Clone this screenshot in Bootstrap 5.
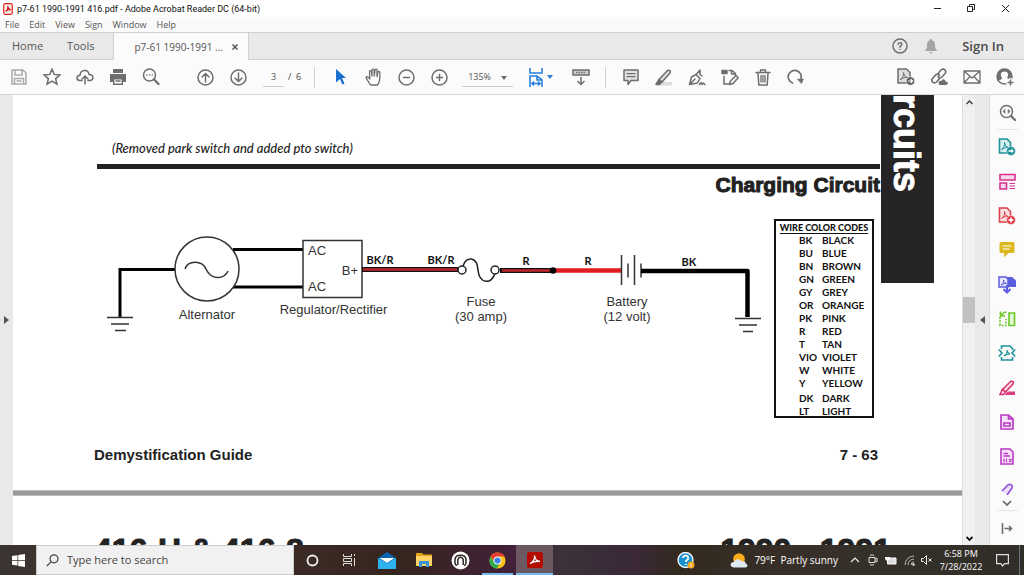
<!DOCTYPE html>
<html lang="en">
<head>
<meta charset="utf-8">
<meta name="viewport" content="width=device-width, initial-scale=1">
<title>p7-61 1990-1991 416.pdf - Adobe Acrobat Reader DC (64-bit)</title>
<link href="https://cdn.jsdelivr.net/npm/bootstrap@5.3.0/dist/css/bootstrap.min.css" rel="stylesheet">
<style>
  body { font-family: "Open Sans", "Noto Sans", sans-serif; font-size: 9px; line-height: 16px; color: #444; background: #fff; }
  svg { display: block; flex: none; }
  button { border: 0; background: none; padding: 0; color: inherit; display: flex; align-items: center; justify-content: center; }
  a { color: inherit; text-decoration: none; }
  .ic { fill: none; stroke: #6e6e6e; stroke-width: 1.5; stroke-linecap: round; stroke-linejoin: round; }
  .title-row { height: 17px; color: #111; padding: 0 2px 0 3px; gap: 4px; font-family: Roboto, sans-serif; }
  .title-row button { width: 34px; height: 17px; }
  .menu-row { height: 15px; background: #fafafa; padding-left: 5px; gap: 10px; color: #555; }
  .tab-row { height: 28px; background: #e9e9e9; border-top: 1px solid #d0d0d0; border-bottom: 1px solid #d0d0d0; font-size: 11px; color: #555; }
  .doc-tab { width: 136px; margin: 0 0 -1px 19px; padding-left: 20px; gap: 9px; background: #fbfbfb; border-left: 1px solid #d0d0d0; border-right: 1px solid #d0d0d0; font-size: 10px; }
  .sign-in { font-size: 13px; font-weight: 600; color: #4b4b4b; }
  .tool-row { height: 35px; background: #fbfbfb; border-bottom: 1px solid #d6d6d6; padding: 0 3px 0 2px; }
  .tool-row button { width: 33px; height: 33px; flex: none; }
  .tool-row .group-start { margin-left: 22px; }
  .page-no { width: 21px; height: 20px; border: 0; border-bottom: 1px solid #ccc; background: none; text-align: center; font-size: 9px; color: #555; padding: 0; }
  .zoom-box { position: relative; width: 51px; height: 20px; margin: 0 6px; border-bottom: 1px solid #ccc; }
  .zoom-box select { appearance: none; border: 0; background: none; width: 100%; height: 19px; font-size: 9px; color: #555; padding: 0 0 0 6px; }
  .zoom-box svg { position: absolute; right: 6px; top: 9px; pointer-events: none; }
  .divider { width: 1px; height: 21px; margin: 0 9px; background: #d0d0d0; }
  .edge { background: #e9e9e9; }
  .doc-area { font-family: "Liberation Sans", Arial, sans-serif; color: #222; }
  .sheet { display: grid; grid-template-columns: minmax(0, 1fr) 53px; column-gap: 1px; padding: 0 28px 0 81px; }
  .note { font: italic 500 13px/16px Lato, sans-serif; margin: 45px 0 0 18px; }
  .rule { height: 5px; margin: 8px 0 0 3px; background: #222; }
  .topic { font-size: 21px; line-height: 26px; font-weight: 700; margin: 3px 0 0; text-align: right; color: #222; -webkit-text-stroke: 1px #222; }
  .side-tab { height: 188px; background: #262425; color: #fff; padding-bottom: 91px; overflow: hidden; }
  .side-tab span { writing-mode: vertical-rl; font-size: 36px; line-height: 44px; font-weight: 700; margin-right: 4px; -webkit-text-stroke: 1px #fff; }
  .figure-row { margin: 21px 6px 0 3px; }
  .diagram { width: 100%; height: auto; margin-top: 9px; overflow: visible; }
  .lbl { font-size: 13px; fill: #333; text-anchor: middle; }
  .wire-lbl { font: 700 11px Lato, sans-serif; fill: #111; text-anchor: middle; }
  .codes { width: 100px; height: 199px; flex: none; border: 2px solid #111; font: 700 10px/13px Lato, sans-serif; color: #111; }
  .codes caption { caption-side: top; padding: 0; font-size: 9px; font-weight: 900; color: #111; text-align: center; text-decoration: underline; text-underline-offset: 2px; white-space: nowrap; }
  .codes table { width: 100%; }
  .codes th, .codes td { padding: 0; height: 13px; }
  .codes th { width: 46px; padding-left: 23px; text-align: left; font-weight: 700; }
  .codes .apart th, .codes .apart td { padding-top: 2px; }
  .foot { font-size: 15px; line-height: 20px; font-weight: 700; margin: 27px 2px 25px 0; }
  .page-gap { height: 6px; background: #999; border-top: 1px solid #bbb; border-bottom: 1px solid #bbb; }
  .next-head { font-size: 32px; line-height: 32px; font-weight: 700; margin: 38px 71px 0 81px; white-space: nowrap; color: #222; -webkit-text-stroke: 1px #222; }
  .vscroll { width: 13px; background: #f0f0f0; border-left: 1px solid #ddd; }
  .vscroll button { height: 14px; width: 12px; }
  .thumb { height: 26px; background: #c1c1c1; }
  .rail { width: 35px; background: #fbfbfb; border-left: 1px solid #ddd; }
  .rail button { width: 34px; height: 32px; flex: none; }
  .rail button.end { height: 34px; }
  .rail button.more { height: 14px; }
  .rail hr { width: 21px; margin: 0 auto; border-color: #aaa; flex: none; }
  .rail .tools { min-height: 0; padding: 1px 0; }
  .rail button.cut { height: 20px; padding-top: 8px; overflow: hidden; align-items: flex-start; }
  .taskbar { height: 30px; color: #fff; background: linear-gradient(90deg, #3a3432 0%, #3b322e 4%, #3b2a23 30%, #35251f 40%, #43203a 50%, #3b3239 55%, #3a2838 62%, #33291f 66%, #37302a 80%, #302e28 100%); }
  .taskbar button { height: 30px; }
  .task { width: 37px; position: relative; }
  .task.open::after { content: ""; position: absolute; left: 3px; right: 3px; bottom: 0; height: 2px; background: #76b9ed; }
  .task.active { background: #6b5860; }
  .task.active::after { left: 0; right: 0; }
  .search { width: 258px; height: 30px; background: #f1f1f1; padding-left: 9px; gap: 8px; border: 1px solid #ccc; }
  .search input { border: 0; background: none; font-size: 11px; color: #444; padding: 0; width: 180px; outline: 0; }
  .search input::placeholder { color: #444; opacity: 1; }
  .weather { font-size: 10px; gap: 6px; white-space: nowrap; }
  .tray { width: 18px; }
  .clock { width: 50px; line-height: 13px; text-align: center; }
</style>
</head>
<body>
<div class="vh-100 d-flex flex-column overflow-hidden">

  <header class="flex-shrink-0">
    <div class="title-row d-flex align-items-center">
      <svg width="10" height="12" viewBox="0 0 10 12"><rect x=".7" y=".7" width="8.6" height="10.6" rx="1.5" fill="#fff0ee" stroke="#e2231a" stroke-width="1.2"/><path d="M2.5 8.3C4 7.5 5 5 4.7 3c.5 2.500 1.500 3.700 3.200 4C6 6.500 4 7 2.500 8.300Z" fill="none" stroke="#c11" stroke-width="1.100"/></svg>
      <span>p7-61 1990-1991 416.pdf - Adobe Acrobat Reader DC (64-bit)</span>
      <div class="d-flex ms-auto">
        <button aria-label="Minimize"><svg width="9" height="9"><path d="M1 4.500h7" stroke="#222"/></svg></button>
        <button aria-label="Restore"><svg width="9" height="9" fill="none" stroke="#222"><path d="M.5 2.500h5v5h-5zM2.500 2.500v-2h5v5h-2"/></svg></button>
        <button aria-label="Close"><svg width="9" height="9" stroke="#222"><path d="M1 1l7 7M8 1l-7 7"/></svg></button>
      </div>
    </div>
    <nav class="menu-row d-flex align-items-center" aria-label="Menu">
      <a href="#">File</a><a href="#">Edit</a><a href="#">View</a><a href="#">Sign</a><a href="#">Window</a><a href="#">Help</a>
    </nav>
    <nav class="tab-row d-flex" aria-label="Tabs">
      <a href="#" class="align-self-center ms-1 ps-2">Home</a>
      <a href="#" class="align-self-center ms-4">Tools</a>
      <div class="doc-tab d-flex align-items-center"><a href="#">p7-61 1990-1991 ...</a>
        <button aria-label="Close tab"><svg width="6" height="6" stroke="#555" stroke-width="1.500"><path d="M.5.5l5 5M5.500.5l-5 5"/></svg></button></div>
      <div class="d-flex align-items-center ms-auto me-3 pe-1">
        <button class="me-3" aria-label="Help"><svg class="ic" width="16" height="16" viewBox="0 0 16 16"><circle cx="8" cy="8" r="7"/><path d="M6.200 6.300C6.200 4 9.900 4.200 9.800 6.300 9.700 7.700 8 7.700 8 9.300M8 11.500v.1"/></svg></button>
        <button class="me-4" aria-label="Notifications"><svg width="14" height="15" viewBox="0 0 14 15" fill="#a5a5a5"><path d="M7 0c.8 0 1.200.5 1.200 1.300C10.500 2 11 4 11 6c0 3 .7 4.300 2.500 6H.5C2.300 10.300 3 9 3 6c0-2 .5-4 2.800-4.700C5.800.5 6.200 0 7 0ZM5.500 13h3c-.3 2-2.700 2-3 0Z"/></svg></button>
        <a href="#" class="sign-in">Sign In</a>
      </div>
    </nav>
    <div class="tool-row d-flex align-items-center">
      <button aria-label="Save"><svg width="16" height="16" viewBox="0 0 16 16" fill="none" stroke="#aaa" stroke-width="1.500"><path d="M1 1h11l3 3v11H1zM4 1v5h7V1M3.500 15V9.500h9V15M5.500 12h5"/></svg></button>
      <button aria-label="Favorite"><svg class="ic" width="18" height="18" viewBox="0 0 18 18"><path d="M9 1.200l2.200 5.200 5.800.5-4.400 3.700 1.400 5.600L9 13.200l-5 3 1.400-5.600L1 6.900l5.800-.5z" stroke-linejoin="miter"/></svg></button>
      <button aria-label="Upload"><svg class="ic" width="18" height="16" viewBox="0 0 18 16"><path d="M6 11.500H4C0 11.500 0 6.500 4 6.300 4.500 0 12.500 0 13 5.500c5 0 5 6 1 6h-2M9 15V7.500M6 10l3-3 3 3"/></svg></button>
      <button aria-label="Print"><svg width="18" height="16" viewBox="0 0 18 16"><path d="M4 0h10v4H4zM1 5h16v8h-3V9.500H4V13H1z" fill="#6e6e6e"/><path d="M4.700 9.700h8.600v5.500H4.700zM6.500 12h5" fill="#fff" stroke="#6e6e6e" stroke-width="1.400"/></svg></button>
      <button aria-label="Find"><svg class="ic" width="18" height="18" viewBox="0 0 18 18"><circle cx="7.500" cy="7" r="6"/><path d="M12 11.500l4.500 4.500" stroke-width="2.300"/><path d="M4.800 7h.1M7.500 7h.1M10.200 7h.1"/></svg></button>
      <button class="group-start" aria-label="Previous page"><svg class="ic" width="17" height="17" viewBox="0 0 17 17"><circle cx="8.500" cy="8.500" r="7.500"/><path d="M8.500 13V4.500M5 8l3.500-3.500L12 8"/></svg></button>
      <button aria-label="Next page"><svg class="ic" width="17" height="17" viewBox="0 0 17 17"><circle cx="8.500" cy="8.500" r="7.500"/><path d="M8.500 4v8.500M5 9l3.500 3.500L12 9"/></svg></button>
      <input class="page-no ms-2" value="3" aria-label="Page"><span class="ms-1 me-1">/&nbsp; 6</span>
      <span class="divider"></span>
      <button aria-label="Select"><svg width="10" height="16" viewBox="0 0 10 16"><path d="M0 0l10 9H6l2.500 5.500-2.200 1L4 10 0 13.500z" fill="#1b6fd0"/></svg></button>
      <button aria-label="Hand"><svg class="ic" width="18" height="18" viewBox="0 0 18 18"><path stroke-width="1.300" d="M5.500 17C4 14 2 12 1 9.500 1.500 8.300 3 8.500 4.800 11L4.500 3.500c.3-1.300 1.800-1.200 2 0L7 8V2c.3-1.300 1.800-1.300 2 0l.3 6L10 2c.3-1.200 1.800-1.200 2 0v6.500l1-4.500c.4-1 1.700-.9 1.800.2C15 9 15.500 14 12.500 17z"/></svg></button>
      <button aria-label="Zoom out"><svg class="ic" width="17" height="17" viewBox="0 0 17 17"><circle cx="8.500" cy="8.500" r="7.500"/><path d="M5.500 8.500h6"/></svg></button>
      <button aria-label="Zoom in"><svg class="ic" width="17" height="17" viewBox="0 0 17 17"><circle cx="8.500" cy="8.500" r="7.500"/><path d="M5.500 8.500h6M8.500 5.500v6"/></svg></button>
      <div class="zoom-box"><select aria-label="Zoom"><option>135%</option></select><svg width="6" height="4"><path d="M0 0h6L3 4z" fill="#666"/></svg></div>
      <button class="ms-1" aria-label="Fit width"><svg width="26" height="19" viewBox="0 0 26 19" fill="none" stroke="#2a7fdb" stroke-width="1.600"><path d="M3 0v5h12V0M3 19V8h7l5 4v7M10 8v4h5M5 15.500h8M7 13.500l-2 2 2 2M11 13.500l2 2-2 2"/><path d="M20 7h6l-3 4z" fill="#2a7fdb" stroke="none"/></svg></button>
      <button class="ms-2" aria-label="Scroll mode"><svg width="18" height="17" viewBox="0 0 18 17" fill="none" stroke="#6e6e6e" stroke-width="1.500"><path d="M1 1h16v5H1z" fill="#ccc"/><path d="M4 3.500h10" stroke-dasharray="1.500 1"/><path d="M9 8v7.500M5.500 12L9 15.500 12.500 12"/></svg></button>
      <span class="divider mx-2"></span>
      <button aria-label="Comment"><svg class="ic" width="16" height="17" viewBox="0 0 16 17"><path d="M1 1h14v10.500H8L5 15.500v-4H1z" fill="#e2e2e2"/><path d="M4 4.700h8M4 7.700h8" stroke-width="1.200"/></svg></button>
      <button aria-label="Highlight"><svg class="ic" width="18" height="17" viewBox="0 0 18 17"><path d="M8 13h9v3.500H5z" fill="#ddd" stroke="none"/><path d="M4 10.500L12.500 1.500c2-1 3.500.5 2.500 2.500L7 13z" fill="#ddd"/><path d="M4 10.500L7 13l-2.500 2.500H1z" fill="#6e6e6e"/></svg></button>
      <button aria-label="Sign"><svg class="ic" width="18" height="17" viewBox="0 0 18 17"><path d="M1.500 15.500l2-7.500L8 5.500l4 4-2.500 4.500zM1.500 15.500L7 10M8.500 5L12 1v4.500L14 7"/><path d="M11.500 15.500l1.500-2 1 2 1.200-1.500 1.800 1.500"/></svg></button>
      <button aria-label="Edit page"><svg class="ic" width="18" height="17" viewBox="0 0 18 17"><path d="M1 1.500h5v3H1z" fill="#6e6e6e"/><path d="M8 1.500h3l3.500 3v2M10.500 1.500v3.500h4M3 7.500v7.500h5M8.500 15.500l1-3.500L15 6.500l2.200 2.200L12 14.500z"/></svg></button>
      <button aria-label="Delete"><svg class="ic" width="16" height="17" viewBox="0 0 16 17"><path d="M1 3.500h14M5.500 3V1h5v2M3 4l.8 12h8.400L13 4"/><path d="M6 6.500v6.500M8 6.500v6.500M10 6.500v6.500" stroke-width="1.300"/></svg></button>
      <button aria-label="Rotate"><svg class="ic" width="17" height="16" viewBox="0 0 17 16"><path d="M5.500 14A6.500 6.500 0 1 1 14 9.500" stroke-width="1.700"/><path d="M10.500 10h6l-2 4.500z" fill="#6e6e6e" stroke-width=".5"/></svg></button>
      <div class="d-flex ms-auto">
        <button aria-label="Export PDF"><svg class="ic" width="18" height="18" viewBox="0 0 18 18"><path d="M1 1h8.500L13 4.500V15H1z" fill="#ddd"/><path d="M3.500 11.500C6 10 7 7 6.500 4.500c.5 3 1.800 4.500 4 5-2.500-.3-5 .5-7 2z" stroke-width="1"/><circle cx="13.500" cy="13" r="4.300" fill="#5d5d5d" stroke="#fff" stroke-width=".6"/><path d="M11.500 13h4M14 11.500l1.500 1.500-1.500 1.500" stroke="#fff" stroke-width="1.200"/></svg></button>
        <button aria-label="Share link"><svg class="ic" width="18" height="18" viewBox="0 0 18 18"><path d="M8 5.500L11 2c3-2.500 6 1 4 3.500L12 9c-1.500 1.500-3.500 1-4-.5M9.500 10.500l-3 3.500c-3 2.500-6-1-4-3.500L5.500 7C7 5.500 9 6 9.500 7.500" stroke-width="1.600"/><path d="M9.500 17c-2.500-3 .5-5 2-4 1-3 4-2 4 .5 3 0 3 3.500.5 3.500z" fill="#6e6e6e" stroke="none"/></svg></button>
        <button aria-label="Mail"><svg class="ic" width="18" height="14" viewBox="0 0 18 14"><path stroke-width="1.300" d="M1 1h16v12H1zM1 1l8 7 8-7M1 13l6-6.500M17 13l-6-6.500"/></svg></button>
        <button aria-label="Account"><svg class="ic" width="18" height="18" viewBox="0 0 18 18"><circle cx="8.500" cy="8.500" r="7.500"/><path d="M2.500 4C5 0 12 0 14.500 4c2 3 1.500 6 0 8l-3.500-2c2-3 1.500-6.500-2.500-6.500S4 7 6 10c.2 1.500-2 1.500-3.500 2.500C.5 10 .5 7 2.500 4z" fill="#6e6e6e" stroke="none"/><path d="M14.500 11.500v6M11.500 14.500h6" stroke="#fbfbfb" stroke-width="3.500"/><path d="M14.500 12v5M12 14.500h5"/></svg></button>
      </div>
    </div>
  </header>

  <main class="d-flex flex-grow-1 overflow-hidden">
    <div class="edge d-flex align-items-center justify-content-center" style="width:13px"><svg width="5" height="8"><path d="M0 0l5 4-5 4z" fill="#555"/></svg></div>

    <div class="doc-area flex-grow-1 overflow-hidden">
      <article class="sheet">
        <div>
          <p class="note">(Removed park switch and added pto switch)</p>
          <div class="rule"></div>
          <h1 class="topic">Charging Circuit</h1>
          <div class="figure-row d-flex align-items-start">
            <div class="flex-grow-1">
            <svg class="diagram" viewBox="97 228 677 112" role="img" aria-label="Charging circuit diagram">
              <g fill="none" stroke="#000" stroke-width="3">
                <path d="M175 269.500H120V317"/><path d="M233 249.500H303M233 287H303"/>
              </g>
              <g fill="none" stroke="#333" stroke-width="1.500">
                <path d="M107 317.500h26M111 324h18M115 330.500h11"/>
                <circle cx="207" cy="269" r="32" fill="#fff"/>
                <path d="M185 269c3-9 17-9 21 0 5 11 18 11 22 2"/>
                <rect x="303" y="240.500" width="59" height="57"/>
                <path d="M735 318.500h26M739 325h18M743 331.500h10"/>
              </g>
              <path d="M362 269.500h96M500 270.500h52" stroke="#111" stroke-width="5"/>
              <path d="M363 269.500h94M502 270.500h48" stroke="#c1272d" stroke-width="2.500"/>
              <path d="M553 270.500h68" stroke="#e01b22" stroke-width="4.500"/>
              <circle cx="553" cy="270.500" r="3.300"/>
              <path d="M463 266c3-10 14-10 15 4 1 14 14 15 17 3" fill="none" stroke="#222" stroke-width="1.600"/>
              <circle cx="462" cy="270" r="4" fill="#fff" stroke="#222" stroke-width="1.500"/>
              <circle cx="495" cy="270" r="4" fill="#fff" stroke="#222" stroke-width="1.500"/>
              <path d="M621.500 255v30M628 263.500v14M634.500 255v30M641 263.500v14" stroke="#333" stroke-width="1.500"/>
              <path d="M641 271h106.500v46" fill="none" stroke="#000" stroke-width="4.500" stroke-linejoin="round"/>
              <g class="lbl">
                <text x="207" y="319">Alternator</text><text x="333.500" y="314">Regulator/Rectifier</text>
                <text x="317" y="255">AC</text><text x="317" y="291">AC</text><text x="350" y="275">B+</text>
                <text x="481" y="306">Fuse</text><text x="481" y="321">(30 amp)</text>
                <text x="627" y="306">Battery</text><text x="627" y="321">(12 volt)</text>
              </g>
              <g class="wire-lbl">
                <text x="380" y="264">BK/R</text><text x="441" y="264">BK/R</text><text x="526" y="265">R</text><text x="588" y="265">R</text><text x="689" y="266">BK</text>
              </g>
            </svg>
            </div>
            <div class="codes">
              <table>
                <caption>WIRE COLOR CODES</caption>
                <tbody>
                <tr><th scope="row">BK</th><td>BLACK</td></tr><tr><th scope="row">BU</th><td>BLUE</td></tr>
                <tr><th scope="row">BN</th><td>BROWN</td></tr><tr><th scope="row">GN</th><td>GREEN</td></tr>
                <tr><th scope="row">GY</th><td>GREY</td></tr><tr><th scope="row">OR</th><td>ORANGE</td></tr>
                <tr><th scope="row">PK</th><td>PINK</td></tr><tr><th scope="row">R</th><td>RED</td></tr>
                <tr><th scope="row">T</th><td>TAN</td></tr><tr><th scope="row">VIO</th><td>VIOLET</td></tr>
                <tr><th scope="row">W</th><td>WHITE</td></tr><tr><th scope="row">Y</th><td>YELLOW</td></tr>
                <tr class="apart"><th scope="row">DK</th><td>DARK</td></tr><tr><th scope="row">LT</th><td>LIGHT</td></tr>
                </tbody>
              </table>
            </div>
          </div>
          <div class="foot d-flex justify-content-between"><span>Demystification Guide</span><span>7 - 63</span></div>
        </div>
        <div class="side-tab d-flex align-items-end justify-content-center"><span>rcuits</span></div>
      </article>
      <div class="page-gap"></div>
      <div class="next-head d-flex justify-content-between"><span>416-H &amp; 416-8</span><span>1990 - 1991</span></div>
    </div>

    <div class="vscroll d-flex flex-column">
      <button aria-label="Scroll up"><svg width="7" height="5" fill="none" stroke="#444" stroke-width="1.500"><path d="M.5 4L3.500 1l3 3"/></svg></button>
      <div class="flex-grow-1 d-flex flex-column"><div style="flex:188"></div><div class="thumb"></div><div style="flex:208"></div></div>
      <button aria-label="Scroll down"><svg width="7" height="5" fill="none" stroke="#111" stroke-width="1.800"><path d="M.5 1l3 3 3-3"/></svg></button>
    </div>
    <div class="edge d-flex align-items-center justify-content-center" style="width:14px"><svg width="5" height="8"><path d="M5 0L0 4l5 4z" fill="#555"/></svg></div>

    <aside class="rail d-flex flex-column">
      <button class="end" aria-label="Search tools"><svg class="ic" width="17" height="17" viewBox="0 0 17 17"><circle cx="7.500" cy="7.500" r="6"/><path d="M12 12l4 4" stroke-width="2.300"/><path d="M6 5.500v4L4 7.500zM9 5.500v4l2-2z" fill="#6e6e6e" stroke-width=".5"/></svg></button>
      <hr>
      <div class="tools flex-grow-1 d-flex flex-column justify-content-between">
        <button aria-label="Export"><svg width="18" height="18" viewBox="0 0 18 18" fill="none" stroke="#1d9299" stroke-width="1.600"><path d="M1.500 1H9l3.500 3.500V15h-11z" fill="#d5eef0"/><path d="M3.500 11.500C6 10 7 7 6.500 4.500c.5 3 1.800 4.500 4 5-2.500-.3-5 .5-7 2z" stroke-width="1"/><circle cx="13" cy="13" r="4.500" fill="#1d9299" stroke="#fff" stroke-width=".5"/><path d="M10.500 13h4.500M13.500 11.500L15 13l-1.500 1.500" stroke="#fff" stroke-width="1.300"/></svg></button>
        <button aria-label="Organize"><svg width="17" height="17" viewBox="0 0 17 17" fill="none" stroke="#d8308f" stroke-width="1.600"><path d="M1 1.500h15V7H1zM1 10h6.500v6H1z" fill="#fbd9ec"/><path d="M10.500 10.500H16M10.500 13H16M10.500 15.500H16" stroke-width="1"/></svg></button>
        <button aria-label="Create"><svg width="18" height="18" viewBox="0 0 18 18" fill="none" stroke="#dc3f49" stroke-width="1.600"><path d="M1.500 1H9l3.500 3.500V15h-11z" fill="#fbe1e2"/><path d="M3.500 11.500C6 10 7 7 6.500 4.500c.5 3 1.800 4.500 4 5-2.500-.3-5 .5-7 2z" stroke-width="1"/><circle cx="13" cy="13" r="4.500" fill="#dc3f49" stroke="#fff" stroke-width=".5"/><path d="M10.500 13h5M13 10.500v5" stroke="#fff" stroke-width="1.500"/></svg></button>
        <button aria-label="Comment"><svg width="16" height="16" viewBox="0 0 16 16"><path d="M2 0h12q1.500 0 1.500 1.500v8Q15.500 11 14 11H9.500L5 15.500V11H2Q.5 11 .5 9.500v-8Q.5 0 2 0z" fill="#dcb81f"/><path d="M3.500 4h9M3.500 7h7" stroke="#fff" stroke-width="1.200"/></svg></button>
        <button aria-label="Combine"><svg width="18" height="18" viewBox="0 0 18 18" fill="none" stroke="#5c5ce0" stroke-width="1.500"><path d="M9 1h5l4 3.500V11H9z" fill="#5c5ce0" stroke="none"/><path d="M1 1h7l2 2v8H1z" fill="#e4e4fc"/><path d="M3 9c2-1 3-3 2.500-5C6 6 7 7 8.500 7.500 6 7.500 5 8 3 9z" stroke-width="1"/><path d="M9 9v7.500M5.500 13L9 16.500l3.500-3.500" stroke-width="2"/></svg></button>
        <button aria-label="Compress pages"><svg width="17" height="17" viewBox="0 0 17 17" fill="none" stroke="#70c92e" stroke-width="1.700"><path d="M10 3h5.500v12.500H10z" fill="#e4f7d4"/><path d="M1 7v8.500h6V9" stroke-dasharray="2 1.300"/><path d="M1.500 1.500V6H6M2 5.500C4 3 5 2 7.500 2"/></svg></button>
        <button aria-label="Compress PDF"><svg width="18" height="16" viewBox="0 0 18 16" fill="none" stroke="#1d9299" stroke-width="1.600"><path d="M3.500 4V1H12l2.500 2.500V5M3.500 12v3h11v-3M.8 4.500L4 8 .8 11.500M17.200 4.500L14 8l3.200 3.500"/><path d="M6 11c2.500-1.500 3.500-4 3-6 .5 2.500 1.500 3.500 3 4-2.500 0-4 .5-6 2z" stroke-width="1.100"/></svg></button>
        <button aria-label="Redact"><svg width="17" height="16" viewBox="0 0 17 16" fill="none" stroke="#d8306d" stroke-width="1.500"><path d="M9 11.500h7V15H5z" fill="#d83f85" stroke="none"/><path d="M3.500 9.500L11.500 1.500c2-1 3.500.5 2.500 2.500L6.500 12z" fill="#fbd9e6"/><path d="M3.500 9.500l3 2.500L4 14.500H1z"/></svg></button>
        <button aria-label="Protect"><svg width="14" height="16" viewBox="0 0 14 16" fill="none" stroke="#b83cc4" stroke-width="1.700"><path d="M1 1h7.500L13 5v10H1z" fill="#f8e2fa"/><path d="M8.500 1v4H13M4 9h6v3H4z"/></svg></button>
        <button aria-label="Form"><svg width="14" height="17" viewBox="0 0 14 17" fill="none" stroke="#b83cc4" stroke-width="1.600"><path d="M1 1h9l3 3v12H1z" fill="#f8e2fa"/><path d="M3.500 5.500H8M3.500 8H10" stroke-width="1.300"/><path d="M4 10.500v4M6.500 10.500v4M9 11l2.500 2.500M11.500 11L9 13.500" stroke-width="1.200"/></svg></button>
        <button class="cut" aria-label="Fill and sign"><svg width="14" height="15" viewBox="0 0 14 15" fill="none" stroke="#9256d9" stroke-width="1.700"><path d="M2 8L8 2c3-2 5 1 4 3L7 12" fill="#eddffa"/></svg></button>
      </div>
      <button class="more" aria-label="More tools"><svg width="10" height="6" fill="none" stroke="#666" stroke-width="1.700"><path d="M1 1l4 4 4-4"/></svg></button>
      <hr>
      <button class="end" aria-label="Collapse pane"><svg width="12" height="11" viewBox="0 0 12 11" fill="none" stroke="#6e6e6e" stroke-width="1.600"><path d="M1.500 0v11M3.500 5.500h7M8 3l2.500 2.500L8 8"/></svg></button>
    </aside>
  </main>

  <footer class="taskbar d-flex align-items-center flex-shrink-0">
    <button style="width:36px" aria-label="Start"><svg width="13" height="13" viewBox="0 0 13 13" fill="#fff"><path d="M0 2l5.500-.8V6H0zM6.200 1L13 0v6H6.200zM0 6.800h5.500v4.800L0 10.800zM6.200 6.800H13V13l-6.800-1z"/></svg></button>
    <label class="search d-flex align-items-center"><svg width="13" height="13" fill="none" stroke="#444" stroke-width="1.200"><circle cx="8" cy="4.800" r="4"/><path d="M5 7.800L.8 12"/></svg><input type="text" placeholder="Type here to search" aria-label="Search"></label>
    <button class="task" aria-label="Cortana"><svg width="13" height="13"><circle cx="6.500" cy="6.500" r="5" fill="none" stroke="#eee" stroke-width="1.800"/></svg></button>
    <button class="task" aria-label="Task view"><svg width="13" height="12" viewBox="0 0 13 12" fill="none" stroke="#ddd"><path d="M.5 0v2.500h8V0M.5 12V9.500h8V12M.5 4.500h8v3h-8zM11.500 0v2M11.500 4v8"/></svg></button>
    <button class="task" aria-label="Mail"><svg width="18" height="17" viewBox="0 0 18 17"><path d="M0 6l9-6 9 6v11H0z" fill="#0a63b0"/><path d="M1.500 6h15L9 11z" fill="#fff"/><path d="M0 6l9 5.500L18 6v11H0z" fill="#2fb2ee"/></svg></button>
    <button class="task" aria-label="File Explorer"><svg width="16" height="14" viewBox="0 0 16 14"><path d="M0 0h6l1.500 1.500H16V13H0z" fill="#e3a21a"/><path d="M0 3h16v10H0z" fill="#ffd367"/><path d="M3 14V8h10v6h-3v-3H6v3z" fill="#3b92d8"/></svg></button>
    <button class="task" aria-label="Media app"><svg width="19" height="19" viewBox="0 0 19 19"><circle cx="9.500" cy="9.500" r="9" fill="#fff"/><path d="M5.500 15L4 12V8c1-5 10-5 11 0v4l-1.500 3M6.800 14V8.500c1-3 4.400-3 5.400 0V14" fill="none" stroke="#302724" stroke-width="1.500"/></svg></button>
    <button class="task open" aria-label="Chrome"><svg width="17" height="17" viewBox="0 0 18 18"><circle cx="9" cy="9" r="8.500" fill="#fbc116"/><path d="M1.600 4.800A8.500 8.500 0 0 0 8.200 17.500L12 11 9 9 5.500 11z" fill="#2da94f"/><path d="M1.600 4.800A8.500 8.500 0 0 1 16.400 4.800H9L5 9z" fill="#e33b2e"/><circle cx="9" cy="9" r="4.200" fill="#fff"/><circle cx="9" cy="9" r="3.300" fill="#3f7fea"/></svg></button>
    <button class="task open active" aria-label="Acrobat Reader"><svg width="16" height="16" viewBox="0 0 16 16"><rect width="16" height="16" rx="2.500" fill="#b30b00"/><path d="M3 11.500C6 10.500 8 7 7.500 3.500 8 7 10 9.300 13 9.300 9.500 9 6 9.800 3 11.500z" fill="none" stroke="#fff" stroke-width="1.300"/></svg></button>

    <button class="ms-auto me-4" style="width:24px" aria-label="Get help"><svg width="18" height="17" viewBox="0 0 18 17"><circle cx="8.500" cy="8" r="7.500" fill="#1691d0" stroke="#fff" stroke-width="1.300"/><path d="M6 6c0-3.500 5.500-3 5.300.2C11.200 8 8.700 8 8.700 10M8.700 12v1" fill="none" stroke="#fff" stroke-width="1.800"/><circle cx="14" cy="13" r="3.500" fill="#f2a51e"/><path d="M14 11v.8M14 12.500v2.500" stroke="#fff"/></svg></button>
    <button class="weather me-2 ms-2"><svg width="18" height="15" viewBox="0 0 18 15"><circle cx="9" cy="6" r="5.800" fill="#ffae1a"/><path d="M4 14.500C-1 14.500 0 8.500 4 9c1-4 7-3.500 7.500-.5 2-1.500 4.500 0 4 2 2.500 0 2.500 4 0 4z" fill="#dfe8f3"/></svg><span>79°F&nbsp; Partly sunny</span></button>
    <button class="tray" aria-label="Show hidden icons"><svg width="10" height="6" fill="none" stroke="#eee" stroke-width="1.200"><path d="M1 5l4-4 4 4"/></svg></button>
    <button class="tray" aria-label="Meet now"><svg width="10" height="12" viewBox="0 0 10 12" fill="none" stroke="#ddd"><path d="M1 3.500h6v5H1zM7 5l2-1v4L7 7M2 1.500q2-1.500 4 0M2 10.500q2 1.500 4 0"/></svg></button>
    <button class="tray" aria-label="Battery"><svg width="12" height="9" viewBox="0 0 12 9"><path d="M3 2h8v6H2.500V5" fill="#ddd" stroke="#fff"/><path d="M0 1h5v2L3 5H2L0 3z" fill="#fff"/></svg></button>
    <button class="tray" aria-label="Wi-Fi"><svg width="11" height="11" viewBox="0 0 11 11" fill="none" stroke="#bbb"><path d="M1 10A9 9 0 0 1 10 1M4 10a6 6 0 0 1 6-6M7 10a3 3 0 0 1 3-3"/><circle cx="9.500" cy="9.500" r="1" fill="#fff"/></svg></button>
    <button class="tray" aria-label="Volume muted"><svg width="12" height="10" viewBox="0 0 12 10" fill="none" stroke="#eee"><path d="M.5 3.500h2l3-3v9l-3-3h-2zM7.500 3.500l3 3M10.500 3.500l-3 3"/></svg></button>
    <button class="clock"><span>6:58 PM<br>7/28/2022</span></button>
    <button class="border-end border-secondary me-1" style="width:34px" aria-label="Notifications"><svg width="13" height="13" viewBox="0 0 13 13" fill="none" stroke="#ddd" stroke-width="1.200"><path d="M.6.6h11.800v9H8.500L6.500 12 5 9.600H.6z"/></svg></button>
  </footer>
</div>
<script src="https://cdn.jsdelivr.net/npm/bootstrap@5.3.0/dist/js/bootstrap.bundle.min.js"></script>
</body>
</html>
